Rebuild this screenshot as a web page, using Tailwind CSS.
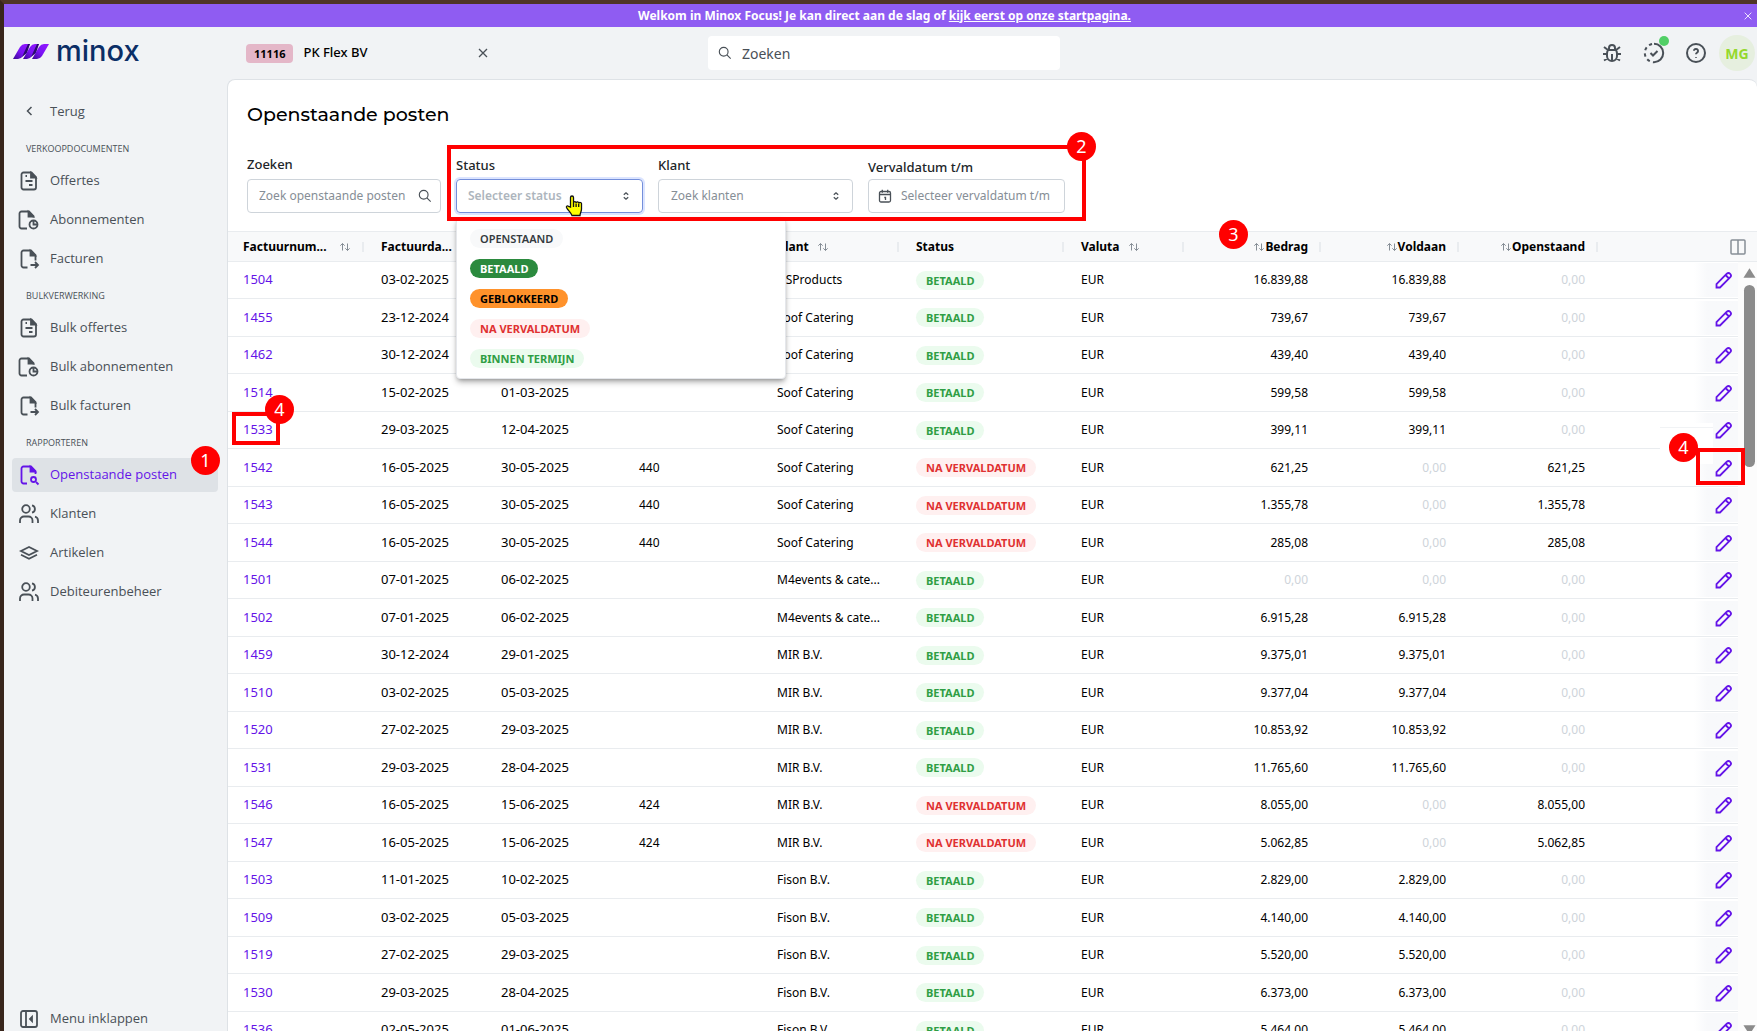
<!DOCTYPE html>
<html lang="nl">
<head>
    <meta charset="UTF-8">
    <meta name="viewport" content="width=device-width, initial-scale=1.0">
    <title>Minox Focus - Openstaande posten</title>
    <script src="https://cdn.jsdelivr.net/npm/@tailwindcss/browser@4"></script>
    <style>
        body { font-family: 'Segoe UI', 'Noto Sans', 'Open Sans', sans-serif; }
    </style>
</head>
<body class="h-screen overflow-hidden bg-[#f1f3f5] text-[13px] text-black">

    <!-- icons -->
    <svg class="hidden">
        <symbol id="i-doc" viewBox="0 0 22 22"><path d="M5.500 2.500h8l4.500 4.500v10.500a2 2 0 0 1-2 2h-10.500a2 2 0 0 1-2-2v-13a2 2 0 0 1 2-2zM7.500 6h1.500M7.500 11h7M11 15h3.500"/><path d="M13 3v4.500h4.500z" fill="currentColor"/></symbol>
        <symbol id="i-doc-time" viewBox="0 0 22 22"><path d="M9 19.500h-5.500a2 2 0 0 1-2-2v-13a2 2 0 0 1 2-2h7.500l4.500 4.500v1.500"/><circle cx="15.500" cy="15.500" r="4"/><path d="M15.500 12v3.500h3.500"/><path d="M10.500 3v4.500h4.500z" fill="currentColor"/></symbol>
        <symbol id="i-doc-arrow" viewBox="0 0 22 22"><path d="M9.500 19.500h-4a2 2 0 0 1-2-2v-13a2 2 0 0 1 2-2h7.500l4.500 4.500v5.500M12.500 17h7M17 14l3 3l-3 3"/><path d="M12.500 3v4.500h4.500z" fill="currentColor"/></symbol>
        <symbol id="i-doc-search" viewBox="0 0 22 22"><path d="M9 19.500h-3.500a2 2 0 0 1-2-2v-13a2 2 0 0 1 2-2h7.500l4.500 4.500v3M18 18l2.500 2.500"/><circle cx="15.500" cy="15.500" r="2.500"/><path d="M12.500 3v4.500h4.500z" fill="currentColor"/></symbol>
        <symbol id="i-users" viewBox="0 0 22 22"><circle cx="8" cy="6" r="3.800"/><path d="M2 20v-2.500a4 4 0 0 1 4-4h4.500a4 4 0 0 1 4 4v2.500M14 2.300a3.800 3.800 0 0 1 0 7.400M20 20v-2.500a4 4 0 0 0-3-3.800"/></symbol>
        <symbol id="i-layers" viewBox="0 0 22 22"><path d="M11 5l-8 4l8 4l8-4zM3 12.800l8 4l8-4"/></symbol>
        <symbol id="i-collapse" viewBox="0 0 22 22"><rect x="3" y="3" width="16" height="16" rx="2"/><path d="M8 3v16M14 9l-2 2l2 2z"/></symbol>
        <symbol id="i-back" viewBox="0 0 22 22"><path d="M13.500 6l-4 4l4 4"/></symbol>
        <symbol id="i-search" viewBox="0 0 16 16"><circle cx="6.500" cy="6.500" r="5"/><path d="M10.200 10.200l4.300 4.300"/></symbol>
        <symbol id="i-close" viewBox="0 0 12 12"><path d="M2 2l8 8M10 2l-8 8"/></symbol>
        <symbol id="i-updown" viewBox="0 0 10 10"><path d="M2.800 3.800l2.200-2l2.200 2M2.800 6.200l2.200 2l2.200-2"/></symbol>
        <symbol id="i-sort" viewBox="0 0 12 10"><path d="M3.500 8.500v-7M1.300 3.700l2.200-2.200l2.200 2.200M8.500 1.500v7M6.300 6.300l2.200 2.200l2.200-2.200"/></symbol>
        <symbol id="i-calendar" viewBox="0 0 14 14"><rect x="1.500" y="2.500" width="11" height="10.500" rx="1.500"/><path d="M4.300 .8v3M9.700 .8v3M1.500 5.500h11M6.300 8.500h1.200v2.500"/></symbol>
        <symbol id="i-pencil" viewBox="0 0 18 18"><path d="M1.500 16.500v-3.500l10.300-10.300a2.480 2.480 0 0 1 3.500 3.500l-10.300 10.300zM10.500 4l3.500 3.500"/></symbol>
        <symbol id="i-bug" viewBox="0 0 22 22"><path d="M8 7.500v-1.500a3 3 0 0 1 6 0v1.500M7 8h8a7 7 0 0 1 1 3.500v2.500a5 5 0 0 1-10 0v-2.500a7 7 0 0 1 1-3.500M2 12h4M16 12h4M11 12v7M3 18.500l3.500-2M19 18.500l-3.500-2M3 5l4 3M19 5l-4 3"/></symbol>
        <symbol id="i-check" viewBox="0 0 22 22"><path d="M11 1.800a9.200 9.200 0 0 1 0 18.400"/><path d="M11 1.800a9.200 9.200 0 0 0 0 18.400" stroke-dasharray="3.200 3.200" stroke-dashoffset="-2"/><path d="M7.500 11l2.500 2.500l4.500-4.500"/></symbol>
        <symbol id="i-help" viewBox="0 0 22 22"><circle cx="11" cy="11" r="9"/><path d="M11 15v.8M9 8.800a2 2 0 1 1 3.200 1.700c-.8 .5-1.200 .9-1.200 1.700"/></symbol>
        <symbol id="i-columns" viewBox="0 0 16 16"><rect x="1" y="1" width="14" height="14" rx="1"/><path d="M8 1v14"/></symbol>
    </svg>

    <div class="relative flex h-full flex-col overflow-hidden border-t-4 border-l-4 border-t-[#4f3526] border-l-[#38251b]">

        <!-- banner -->
        <div class="relative flex h-[23px] shrink-0 items-center justify-center bg-[#8f5cf2] pl-2 text-[12px] font-bold text-white">
            <p>Welkom in Minox Focus! Je kan direct aan de slag of <a href="#" class="underline">kijk eerst op onze startpagina.</a></p>
            <button class="absolute right-1 p-0" aria-label="Sluiten"><svg class="size-[10px] fill-none stroke-white"><use href="#i-close"/></svg></button>
        </div>

        <!-- top bar -->
        <header class="grid h-[52px] shrink-0 grid-cols-[1fr_352px_1fr] items-center pr-[2px] pl-[9px] text-[#495057]">
            <div class="flex items-center">
                <a href="#" class="flex w-[233px] items-center gap-[7px] pb-1" aria-label="minox">
                    <svg viewBox="0 0 36 18" class="h-[18px] w-[36px]">
                        <defs><linearGradient id="mark" x1="0" y1="1" x2="1" y2="0"><stop offset="0" stop-color="#3a0a92"/><stop offset=".45" stop-color="#7a12f5"/><stop offset="1" stop-color="#9318ff"/></linearGradient></defs>
                        <path fill="url(#mark)" d="M0 17l7-12q2-3 5-3h5l-7 12q-2 3-5 3z"/>
                        <path fill="#2a0a6e" d="M15 2h2l-3 9l-5 4z"/>
                        <path fill="url(#mark)" d="M10 17l7-12q2-3 5-3h4l-7 12q-2 3-5 3z"/>
                        <path fill="#2a0a6e" d="M24 2h2l-3 9l-5 4z"/>
                        <path fill="url(#mark)" d="M19 17l7-12q2-3 5-3h5l-7 12q-2 3-5 3z"/>
                    </svg>
                    <span class="font-['Inter'] text-[29px] leading-8 font-medium text-[#0b2e66]">minox</span>
                </a>
                <span class="rounded bg-[#e4b7c8] px-2 text-[11px] leading-[19px] font-bold text-black">11116</span>
                <span class="ml-[10px] text-[13px] font-medium text-black">PK Flex BV</span>
                <button class="ml-auto mr-[219px]" aria-label="Administratie sluiten"><svg class="size-[12px] fill-none stroke-current stroke-[1.3]"><use href="#i-close"/></svg></button>
            </div>
            <label class="flex h-[34px] items-center gap-[10px] rounded bg-white px-[10px]">
                <svg class="size-[14px] shrink-0 fill-none stroke-current stroke-[1.3]"><use href="#i-search"/></svg>
                <input type="text" placeholder="Zoeken" aria-label="Zoeken" class="w-full text-[14px] outline-none placeholder:text-[#495057]">
            </label>
            <div class="flex items-center justify-end gap-5">
                <button aria-label="Fout melden"><svg class="size-[22px] fill-none stroke-current stroke-2"><use href="#i-bug"/></svg></button>
                <button class="relative" aria-label="Taken"><svg class="size-[22px] fill-none stroke-current stroke-2"><use href="#i-check"/></svg><span class="absolute -top-[6px] -right-1 size-[10px] rounded-full bg-[#51cf66]"></span></button>
                <button aria-label="Help"><svg class="size-[22px] fill-none stroke-current stroke-2"><use href="#i-help"/></svg></button>
                <button class="-ml-2 size-[36px] rounded-full bg-[#e6efdf] text-[14px] font-bold text-[#94d82d]">MG</button>
            </div>
        </header>

        <div class="flex min-h-0 flex-1">
            <!-- sidebar -->
            <nav class="flex w-[223px] shrink-0 flex-col pt-4 pr-[9px] pl-2 font-['Open_Sans'] text-[#495057]">
                <a href="#" class="mb-[5px] flex h-[34px] items-center gap-[10px] px-[6px]"><svg class="size-[22px] fill-none stroke-current stroke-[1.5]"><use href="#i-back"/></svg>Terug</a>
                <h2 class="flex h-[30px] items-center px-[14px] text-[9px]">VERKOOPDOCUMENTEN</h2>
                <a href="#" class="mb-[5px] flex h-[34px] items-center gap-[10px] px-[6px]"><svg class="size-[22px] fill-none stroke-current stroke-[1.8]"><use href="#i-doc"/></svg>Offertes</a>
                <a href="#" class="mb-[5px] flex h-[34px] items-center gap-[10px] px-[6px]"><svg class="size-[22px] fill-none stroke-current stroke-[1.8]"><use href="#i-doc-time"/></svg>Abonnementen</a>
                <a href="#" class="mb-[5px] flex h-[34px] items-center gap-[10px] px-[6px]"><svg class="size-[22px] fill-none stroke-current stroke-[1.8]"><use href="#i-doc-arrow"/></svg>Facturen</a>
                <h2 class="flex h-[30px] items-center px-[14px] text-[9px]">BULKVERWERKING</h2>
                <a href="#" class="mb-[5px] flex h-[34px] items-center gap-[10px] px-[6px]"><svg class="size-[22px] fill-none stroke-current stroke-[1.8]"><use href="#i-doc"/></svg>Bulk offertes</a>
                <a href="#" class="mb-[5px] flex h-[34px] items-center gap-[10px] px-[6px]"><svg class="size-[22px] fill-none stroke-current stroke-[1.8]"><use href="#i-doc-time"/></svg>Bulk abonnementen</a>
                <a href="#" class="mb-[5px] flex h-[34px] items-center gap-[10px] px-[6px]"><svg class="size-[22px] fill-none stroke-current stroke-[1.8]"><use href="#i-doc-arrow"/></svg>Bulk facturen</a>
                <h2 class="flex h-[30px] items-center px-[14px] text-[9px]">RAPPORTEREN</h2>
                <a href="#" class="mb-[5px] flex h-[34px] items-center gap-[10px] rounded bg-[#dee2e6] px-[6px] text-[#6414e8]"><svg class="size-[22px] fill-none stroke-current stroke-[1.8]"><use href="#i-doc-search"/></svg>Openstaande posten</a>
                <a href="#" class="mb-[5px] flex h-[34px] items-center gap-[10px] px-[6px]"><svg class="size-[22px] fill-none stroke-current stroke-[1.8]"><use href="#i-users"/></svg>Klanten</a>
                <a href="#" class="mb-[5px] flex h-[34px] items-center gap-[10px] px-[6px]"><svg class="size-[22px] fill-none stroke-current stroke-[1.8]"><use href="#i-layers"/></svg>Artikelen</a>
                <a href="#" class="mb-[5px] flex h-[34px] items-center gap-[10px] px-[6px]"><svg class="size-[22px] fill-none stroke-current stroke-[1.8]"><use href="#i-users"/></svg>Debiteurenbeheer</a>
                <button class="mt-auto flex h-[24px] items-center gap-[10px] px-[6px]"><svg class="size-[22px] fill-none stroke-current stroke-[1.8]"><use href="#i-collapse"/></svg>Menu inklappen</button>
            </nav>

            <!-- content -->
            <main class="flex min-w-0 flex-1 flex-col rounded-t-lg border-t border-l border-[#dee2e6] bg-white">
                <h1 class="px-[19px] pt-[21px] font-['Montserrat','Inter'] text-[19px] leading-7 font-medium">Openstaande posten</h1>

                <form class="mt-[25px] flex items-end gap-[15px] px-[19px] font-medium text-[#212529]">
                    <div>
                        <label for="zoek" class="mb-[5px] block leading-5">Zoeken</label>
                        <div class="flex h-[34px] w-[194px] items-center gap-2 rounded border border-[#ced4da] pr-2 pl-[11px]">
                            <input id="zoek" type="text" placeholder="Zoek openstaande posten" class="min-w-0 flex-1 text-[12px] font-normal outline-none placeholder:text-[#868e96]">
                            <svg class="size-[14px] shrink-0 fill-none stroke-[#495057] stroke-[1.3]"><use href="#i-search"/></svg>
                        </div>
                    </div>
                    <div class="relative">
                        <label for="status" class="mb-1 block leading-5">Status</label>
                        <select id="status" class="block h-[34px] w-[187px] appearance-none rounded border border-[#748fda] pl-[11px] text-[12px] font-semibold text-[#adb5bd] ring-2 ring-[#dbe4ff]"><option>Selecteer status</option></select>
                        <svg class="absolute right-3 bottom-3 size-[10px] fill-none stroke-[#495057] stroke-[1.3]"><use href="#i-updown"/></svg>
                        <!-- open option list -->
                        <ul role="listbox" aria-label="Status" class="absolute top-full left-0 z-10 mt-1 flex w-[330px] flex-col items-start gap-[11px] rounded border border-gray-200 bg-white pt-[11px] pr-3 pb-[10px] pl-[13px] text-[11px] leading-[19px] font-bold shadow-md shadow-black/30">
                            <li role="option" class="rounded-full bg-[#f8f9fa] px-[10px] font-semibold text-[#343a40]">OPENSTAAND</li>
                            <li role="option" class="rounded-full bg-[#2b8a3e] px-[10px] text-white">BETAALD</li>
                            <li role="option" class="rounded-full bg-[#ff922b] px-[10px] text-black">GEBLOKKEERD</li>
                            <li role="option" class="rounded-full bg-[#fff0f0] px-[10px] text-[#e03131]">NA VERVALDATUM</li>
                            <li role="option" class="rounded-full bg-[#ebfbee] px-[10px] text-[#2f9e44]">BINNEN TERMIJN</li>
                        </ul>
                    </div>
                    <div class="relative">
                        <label for="klant" class="mb-1 block leading-5">Klant</label>
                        <select id="klant" class="block h-[34px] w-[195px] appearance-none rounded border border-[#ced4da] pl-3 text-[12px] font-normal text-[#868e96]"><option>Zoek klanten</option></select>
                        <svg class="absolute right-3 bottom-3 size-[10px] fill-none stroke-[#495057] stroke-[1.3]"><use href="#i-updown"/></svg>
                    </div>
                    <div>
                        <label for="datum" class="mb-[2px] block leading-5">Vervaldatum t/m</label>
                        <div class="flex h-[34px] w-[197px] items-center gap-[9px] rounded border border-[#ced4da] pr-2 pl-[9px]">
                            <svg class="size-[14px] shrink-0 fill-none stroke-[#495057] stroke-[1.3]"><use href="#i-calendar"/></svg>
                            <input id="datum" type="text" placeholder="Selecteer vervaldatum t/m" class="min-w-0 flex-1 text-[12px] font-normal outline-none placeholder:text-[#868e96]">
                        </div>
                    </div>
                </form>

                <div class="relative mt-[18px] min-h-0 flex-1 overflow-hidden">
                    <table class="w-full table-fixed border-separate border-spacing-0">
                        <colgroup>
                            <col class="w-[138px]"><col class="w-[120px]"><col class="w-[138px]"><col class="w-[138px]"><col class="w-[139px]"><col class="w-[165px]"><col class="w-[120px]"><col class="w-[137px]"><col class="w-[138px]"><col class="w-[139px]"><col>
                        </colgroup>
                        <thead id="head"></thead>
                        <tbody id="rows"></tbody>
                    </table>
                    <!-- scrollbar -->
                    <div class="absolute top-[31px] right-0 bottom-0 flex w-[19px] flex-col items-center bg-[#fcfcfc] pl-1">
                        <svg viewBox="0 0 14 10" class="mt-[6px] h-[10px] w-[13px] fill-[#8b8b8b]"><path d="M7 0l6.500 10h-13z"/></svg>
                        <div class="mt-[7px] h-[182px] w-[11px] rounded-full bg-[#8b8b8b]"></div>
                        <svg viewBox="0 0 14 10" class="mt-auto mb-[-4px] h-[10px] w-[13px] fill-[#8b8b8b]"><path d="M7 10l6.500-10h-13z"/></svg>
                    </div>
                </div>
            </main>
        </div>

        <!-- annotations -->
        <div class="pointer-events-none absolute inset-0 z-20 text-[18px] text-white">
            <div class="absolute top-[419px] left-[1656px] h-[41px] w-[53px] bg-white pt-1"><div class="h-px bg-[#f1f3f5]"></div></div>
            <div class="absolute top-[141px] left-[443px] h-[76px] w-[639px] border-4 border-[#f00]"></div>
            <div class="absolute top-[408px] left-[228px] h-[33px] w-[48px] border-4 border-[#f00]"></div>
            <div class="absolute top-[444px] left-[1692px] h-[37px] w-[49px] border-4 border-[#f00]"></div>
            <span class="absolute top-[442px] left-[187px] flex size-[29px] items-center justify-center rounded-full bg-[#f00]">1</span>
            <span class="absolute top-[128px] left-[1063px] flex size-[29px] items-center justify-center rounded-full bg-[#f00]">2</span>
            <span class="absolute top-[216px] left-[1215px] flex size-[29px] items-center justify-center rounded-full bg-[#f00]">3</span>
            <span class="absolute top-[391px] left-[261px] flex size-[29px] items-center justify-center rounded-full bg-[#f00]">4</span>
            <span class="absolute top-[429px] left-[1665px] flex size-[29px] items-center justify-center rounded-full bg-[#f00]">4</span>
            <svg viewBox="0 0 18 22" class="absolute top-[191px] left-[561px] h-[22px] w-[18px]"><path d="M5.500 12V2.500a1.500 1.500 0 0 1 3 0V8a1.300 1.300 0 0 1 2.600 0a1.300 1.300 0 0 1 2.600 .5a1.300 1.300 0 0 1 2.800 .8V14c0 3-1.500 4-1.500 6.500H7C6 17.500 3 15.500 1.500 12.500c-.5-1.500 1-2 2-1.200z" fill="#ff0" stroke="#111" stroke-width="1.300"/><path d="M8.500 8v4M11.100 8.500v3.500M13.700 9v3" stroke="#111" stroke-width="1.300"/></svg>
        </div>
    </div>

    <script>
        const PAID = 'BETAALD', LATE = 'NA VERVALDATUM';
        // nummer, factuurdatum, vervaldatum, dagen, klant, status, bedrag, voldaan, openstaand
        const invoices = [
            ['1504', '03-02-2025', '', '', 'DSProducts', PAID, '16.839,88', '16.839,88', '0,00'],
            ['1455', '23-12-2024', '', '', 'Soof Catering', PAID, '739,67', '739,67', '0,00'],
            ['1462', '30-12-2024', '', '', 'Soof Catering', PAID, '439,40', '439,40', '0,00'],
            ['1514', '15-02-2025', '01-03-2025', '', 'Soof Catering', PAID, '599,58', '599,58', '0,00'],
            ['1533', '29-03-2025', '12-04-2025', '', 'Soof Catering', PAID, '399,11', '399,11', '0,00'],
            ['1542', '16-05-2025', '30-05-2025', '440', 'Soof Catering', LATE, '621,25', '0,00', '621,25'],
            ['1543', '16-05-2025', '30-05-2025', '440', 'Soof Catering', LATE, '1.355,78', '0,00', '1.355,78'],
            ['1544', '16-05-2025', '30-05-2025', '440', 'Soof Catering', LATE, '285,08', '0,00', '285,08'],
            ['1501', '07-01-2025', '06-02-2025', '', 'M4events & cate...', PAID, '0,00', '0,00', '0,00'],
            ['1502', '07-01-2025', '06-02-2025', '', 'M4events & cate...', PAID, '6.915,28', '6.915,28', '0,00'],
            ['1459', '30-12-2024', '29-01-2025', '', 'MIR B.V.', PAID, '9.375,01', '9.375,01', '0,00'],
            ['1510', '03-02-2025', '05-03-2025', '', 'MIR B.V.', PAID, '9.377,04', '9.377,04', '0,00'],
            ['1520', '27-02-2025', '29-03-2025', '', 'MIR B.V.', PAID, '10.853,92', '10.853,92', '0,00'],
            ['1531', '29-03-2025', '28-04-2025', '', 'MIR B.V.', PAID, '11.765,60', '11.765,60', '0,00'],
            ['1546', '16-05-2025', '15-06-2025', '424', 'MIR B.V.', LATE, '8.055,00', '0,00', '8.055,00'],
            ['1547', '16-05-2025', '15-06-2025', '424', 'MIR B.V.', LATE, '5.062,85', '0,00', '5.062,85'],
            ['1503', '11-01-2025', '10-02-2025', '', 'Fison B.V.', PAID, '2.829,00', '2.829,00', '0,00'],
            ['1509', '03-02-2025', '05-03-2025', '', 'Fison B.V.', PAID, '4.140,00', '4.140,00', '0,00'],
            ['1519', '27-02-2025', '29-03-2025', '', 'Fison B.V.', PAID, '5.520,00', '5.520,00', '0,00'],
            ['1530', '29-03-2025', '28-04-2025', '', 'Fison B.V.', PAID, '6.373,00', '6.373,00', '0,00'],
            ['1536', '02-05-2025', '01-06-2025', '', 'Fison B.V.', PAID, '5.464,00', '5.464,00', '0,00'],
        ];

        const sortIcon = '<svg class="h-[10px] w-[12px] shrink-0 fill-none stroke-[#868e96]"><use href="#i-sort"/></svg>';
        const columns = [
            ['Factuurnum...', 'wide'], ['Factuurda...', 'none'], ['', 'none'], ['', 'none'], ['Klant', 'after'], ['Status', 'none'],
            ['Valuta', 'after'], ['Bedrag', 'before'], ['Voldaan', 'before'], ['Openstaand', 'before'],
        ];
        const headCell = ([name, sort]) => `
            <th class="relative h-[31px] border-y border-[#e9ecef] bg-[#f8f9fa] px-[15px] text-left text-[12px] font-bold">
                <div class="flex items-center whitespace-nowrap ${sort === 'before' ? 'justify-end' : sort === 'wide' ? 'justify-between' : 'gap-2'}">
                    ${sort === 'before' ? sortIcon : ''}<span>${name}</span>${sort === 'after' || sort === 'wide' ? sortIcon : ''}
                </div>
                <span class="absolute top-[10px] right-[2px] h-[10px] w-[2px] bg-[#e9ecef]"></span>
            </th>`;
        document.getElementById('head').innerHTML = `<tr>${columns.map(headCell).join('')}
            <th class="border-y border-[#e9ecef] bg-[#f8f9fa] pr-[11px] text-right"><button class="block ml-auto" aria-label="Kolommen"><svg class="size-[16px] fill-none stroke-[#868e96] stroke-[1.5]"><use href="#i-columns"/></svg></button></th></tr>`;

        const badge = (status) => status === PAID
            ? `<span class="block w-fit rounded-full bg-[#ebfbee] px-[10px] text-[11px] leading-[19px] font-bold text-[#2f9e44]">${status}</span>`
            : `<span class="block w-fit rounded-full bg-[#fff0f0] px-[10px] text-[11px] leading-[19px] font-bold text-[#e03131]">${status}</span>`;
        const text = (value) => `<td class="border-b border-[#e9ecef] px-[15px] text-[12px] whitespace-nowrap">${value.replace('&', '&amp;')}</td>`;
        const date = (value) => `<td class="border-b border-[#e9ecef] px-[15px] whitespace-nowrap">${value}</td>`;
        const amount = (value) => `<td class="border-b border-[#e9ecef] px-[15px] text-right text-[12px] ${value === '0,00' ? 'text-[#ced4da]' : ''}">${value}</td>`;

        document.getElementById('rows').innerHTML = invoices.map(([nr, from, due, days, client, status, total, paid, open]) => `
            <tr class="h-[37px] even:h-[38px]">
                <td class="border-b border-[#e9ecef] px-[15px]"><a href="#" class="text-[#6414e8]">${nr}</a></td>
                ${date(from)}${date(due)}${text(days)}${text(client)}
                <td class="border-b border-[#e9ecef] px-[15px]">${badge(status)}</td>
                ${text('EUR')}${amount(total)}${amount(paid)}${amount(open)}
                <td class="border-b border-[#e9ecef] pr-[19px]"><div class="ml-auto flex h-[34px] w-[44px] items-center justify-center bg-linear-to-r from-white to-[#f8f9fb] to-30% pl-4"><button aria-label="Bewerken"><svg class="block size-[18px] fill-none stroke-[#6414e8] stroke-[1.8]"><use href="#i-pencil"/></svg></button></div></td>
            </tr>`).join('');
    </script>
</body>
</html>
